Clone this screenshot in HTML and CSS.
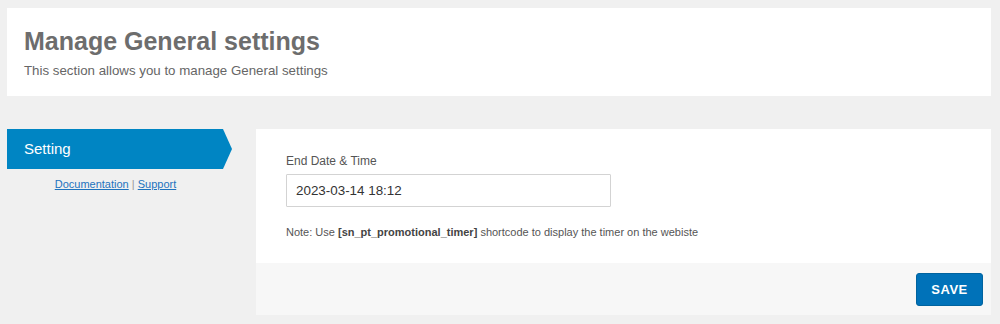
FILE: index.html
```html
<!DOCTYPE HTML>
<html lang="en">
<head>
    <meta charset="utf-8">
    <meta name="viewport" content="width=device-width, initial-scale=1">
    <title>Manage General settings</title>
    <link rel="stylesheet" href="styles.css">
</head>
<body>
    <header class="page-header">
        <h1>Manage General settings</h1>
        <p>This section allows you to manage General settings</p>
    </header>

    <div class="layout">
        <aside class="sidebar">
            <div class="tab">Setting</div>
            <div class="links">
                <a href="#">Documentation</a> | <a href="#">Support</a>
            </div>
        </aside>

        <main class="panel">
            <div class="panel-body">
                <label class="field-label" for="endDate">End Date &amp; Time</label>
                <input id="endDate" class="field-input" type="text" value="2023-03-14 18:12">
                <p class="note">Note: Use <b>[sn_pt_promotional_timer]</b> shortcode to display the timer on the webiste</p>
            </div>
            <div class="panel-footer">
                <button class="save-btn">SAVE</button>
            </div>
        </main>
    </div>
</body>
</html>
```

FILE: styles.css
```css
/* Base styles */
body {
    font-family: "Liberation Sans", Arial, sans-serif;
    margin: 0;
    padding: 8px 9px 0 7px;
    background-color: #f0f0f0;
    color: #555;
}

/* Header */
.page-header {
    background-color: #fff;
    height: 88px;
    box-sizing: border-box;
    padding: 19px 17px 0;
}
.page-header h1 {
    margin: 0;
    font-size: 25px;
    line-height: 28px;
    color: #6d6d6d;
    font-weight: bold;
}
.page-header p {
    margin: 8px 0 0;
    font-size: 13.3px;
    color: #666;
}

/* Layout */
.layout {
    display: flex;
    margin-top: 33px;
    gap: 24px;
}

/* Sidebar */
.sidebar {
    width: 225px;
    flex-shrink: 0;
}
.tab {
    height: 40px;
    line-height: 40px;
    padding-left: 17px;
    background-color: #0085c3;
    color: #fff;
    font-size: 15px;
    clip-path: polygon(0 0, 216px 0, 225px 50%, 216px 100%, 0 100%);
}
.links {
    width: 217px;
    margin-top: 9px;
    text-align: center;
    font-size: 11px;
    color: #999;
}
.links a {
    color: #1e73be;
}

/* Main panel */
.panel {
    flex: 1;
    background-color: #fff;
}
.panel-body {
    padding: 25px 30px 25px;
}
.field-label {
    display: block;
    font-size: 12px;
    color: #555;
    margin-bottom: 6px;
}
.field-input {
    display: block;
    width: 325px;
    height: 33px;
    box-sizing: border-box;
    border: 1px solid #d3d3d3;
    border-radius: 1px;
    padding: 0 9px;
    font-family: "Liberation Sans", Arial, sans-serif;
    font-size: 13.4px;
    color: #333;
}
.note {
    margin: 19px 0 0;
    font-size: 11px;
    color: #555;
}
.note b {
    color: #444;
}
.panel-footer {
    background-color: #f7f7f7;
    height: 52px;
    display: flex;
    justify-content: flex-end;
    align-items: flex-start;
    padding: 10px 8px 0;
    box-sizing: border-box;
}
.save-btn {
    width: 67px;
    height: 33px;
    background-color: #0072b9;
    color: #fff;
    border: 1px solid #00639f;
    border-radius: 3px;
    font-family: "Liberation Sans", Arial, sans-serif;
    font-size: 13px;
    font-weight: bold;
    letter-spacing: 0.5px;
    cursor: pointer;
}
```
